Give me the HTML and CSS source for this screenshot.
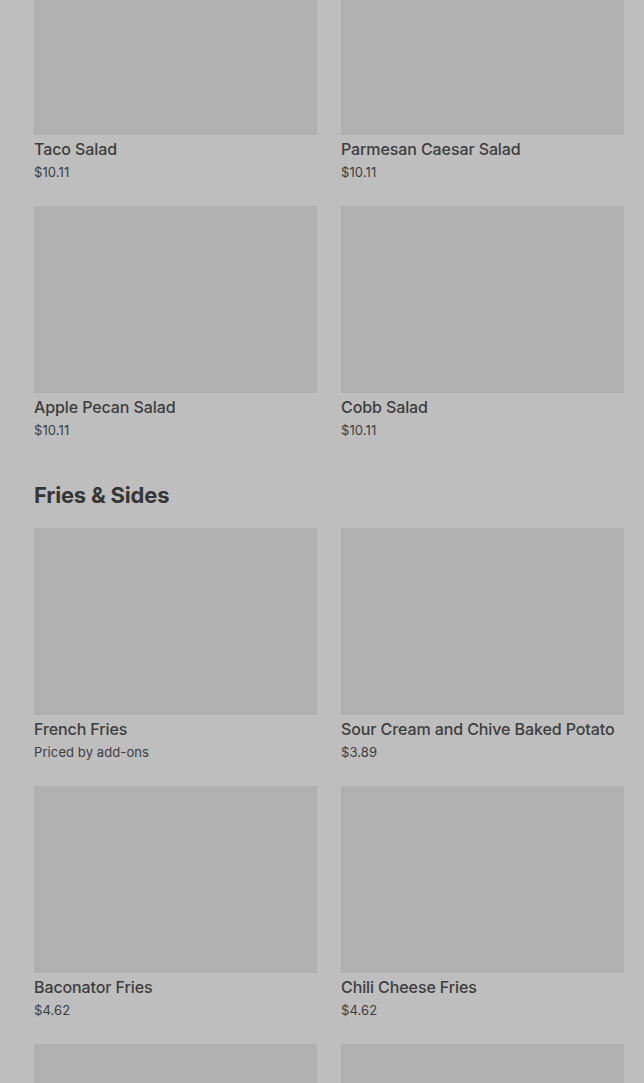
FILE: index.html
```html
<!DOCTYPE html>
<html lang="en">
<head>
    <meta charset="UTF-8">
    <meta name="viewport" content="width=device-width, initial-scale=1.0">
    <title>Menu</title>
    <link rel="stylesheet" href="styles.css">
</head>
<body>
    <div class="menu">
        <section class="category">
            <div class="item-grid">
                <div class="item-card">
                    <div class="item-image"></div>
                    <h3>Taco Salad</h3>
                    <p>$10.11</p>
                </div>
                <div class="item-card">
                    <div class="item-image"></div>
                    <h3>Parmesan Caesar Salad</h3>
                    <p>$10.11</p>
                </div>
                <div class="item-card">
                    <div class="item-image"></div>
                    <h3>Apple Pecan Salad</h3>
                    <p>$10.11</p>
                </div>
                <div class="item-card">
                    <div class="item-image"></div>
                    <h3>Cobb Salad</h3>
                    <p>$10.11</p>
                </div>
            </div>
        </section>

        <section class="category">
            <h2>Fries &amp; Sides</h2>
            <div class="item-grid">
                <div class="item-card">
                    <div class="item-image"></div>
                    <h3>French Fries</h3>
                    <p>Priced by add-ons</p>
                </div>
                <div class="item-card">
                    <div class="item-image"></div>
                    <h3>Sour Cream and Chive Baked Potato</h3>
                    <p>$3.89</p>
                </div>
                <div class="item-card">
                    <div class="item-image"></div>
                    <h3>Baconator Fries</h3>
                    <p>$4.62</p>
                </div>
                <div class="item-card">
                    <div class="item-image"></div>
                    <h3>Chili Cheese Fries</h3>
                    <p>$4.62</p>
                </div>
                <!-- next row is only partly in view -->
                <div class="item-card">
                    <div class="item-image"></div>
                </div>
                <div class="item-card">
                    <div class="item-image"></div>
                </div>
            </div>
        </section>
    </div>
</body>
</html>
```

FILE: styles.css
```css
:root {
    --page: #bebebe;
    --tile: #b0b0b0;
    --text: #3d3d3d;
}

body {
    font-family: Inter, 'Noto Sans', sans-serif;
    background: var(--page);
    color: var(--text);
    margin: 0;
    overflow: hidden;
}

.menu {
    padding: 0 20px 0 34px;
    margin-top: -52px;
}

.category + .category {
    margin-top: 40px;
}

.category h2 {
    font-size: 22px;
    font-weight: 700;
    line-height: 30px;
    letter-spacing: -0.2px;
    color: #363636;
    margin: 0 0 18px;
}

.item-grid {
    display: grid;
    grid-template-columns: 1fr 1fr;
    gap: 24px;
}

.item-card {
    padding-bottom: 1px;
}

.item-image {
    height: 187px;
    background: var(--tile);
}

.item-card h3 {
    font-size: 16px;
    font-weight: 500;
    line-height: 20px;
    letter-spacing: -0.1px;
    margin: 4px 0 0;
    white-space: nowrap;
}

.item-card p {
    font-size: 13px;
    line-height: 18px;
    letter-spacing: 0.1px;
    margin: 4px 0 0;
}
```
